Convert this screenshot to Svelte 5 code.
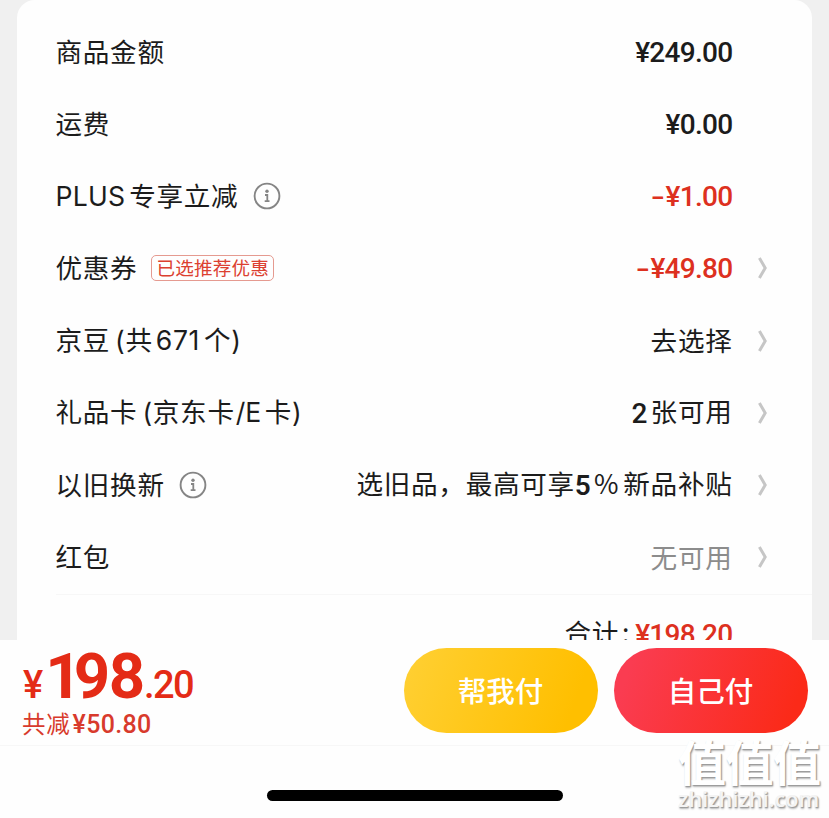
<script>
  const rows = [
    { label: [{ t: '商品金额' }], value: [{ t: '¥249.00', k: 'num' }] },
    { label: [{ t: '运费' }], value: [{ t: '¥0.00', k: 'num' }] },
    { label: [{ t: 'PLUS', k: 'latin' }, { t: '专享立减', k: 'after' }], info: true, value: [{ t: '-', k: 'num dash' }, { t: '¥1.00', k: 'num' }], tone: 'red' },
    { label: [{ t: '优惠券' }], tag: '已选推荐优惠', value: [{ t: '-', k: 'num dash' }, { t: '¥49.80', k: 'num' }], tone: 'red', go: true },
    { label: [{ t: '京豆' }, { t: '(', k: 'paren' }, { t: '共' }, { t: '671', k: 'count' }, { t: '个', k: 'after' }, { t: ')', k: 'close' }], value: [{ t: '去选择' }], go: true },
    { label: [{ t: '礼品卡' }, { t: '(', k: 'paren' }, { t: '京东卡' }, { t: '/E', k: 'slash' }, { t: '卡', k: 'after' }, { t: ')', k: 'close' }], value: [{ t: '2', k: 'num' }, { t: '张可用', k: 'after' }], go: true },
    { label: [{ t: '以旧换新' }], info: true, value: [{ t: '选旧品，最高可享' }, { t: '5', k: 'num five' }, { t: '%', k: 'pct' }, { t: '新品补贴', k: 'after' }], go: true },
    { label: [{ t: '红包' }], value: [{ t: '无可用' }], tone: 'muted', go: true }
  ];
</script>

{#snippet pieces(list)}{#each list as p}<span class={p.k ?? 'cjk'}>{p.t}</span>{/each}{/snippet}

<div class="screen">
  <main>
    <section class="card">
      <div class="rows">
        {#each rows as row}
          <div class="row">
            <div class="label">{@render pieces(row.label)}</div>
            {#if row.info}
              <svg class="info" width="28" height="28" viewBox="0 0 28 28" fill="none" stroke="#858585">
                <circle cx="14" cy="14" r="12.4" stroke-width="1.9" />
                <circle cx="14" cy="9.3" r="1.7" fill="#858585" stroke="none" />
                <path d="M12 13h2.3v6M11.7 19.2h4.8" stroke-width="1.8" />
              </svg>
            {/if}
            {#if row.tag}<span class="tag">{row.tag}</span>{/if}
            <div class="value {row.tone ?? ''}">{@render pieces(row.value)}</div>
            <div class="go">
              {#if row.go}
                <svg width="12" height="22" viewBox="0 0 12 22" fill="none" stroke="#c6c6c6" stroke-width="3">
                  <path d="M2.4 1 8.2 11 2.4 21" />
                </svg>
              {/if}
            </div>
          </div>
        {/each}
      </div>
      <div class="total"><span>合计</span><span class="colon">:</span><span class="num red">¥198.20</span></div>
    </section>
  </main>
  <footer>
    <div class="sum">
      <div class="price"><span class="yen">¥</span><span class="big"><span class="one">1</span>98</span><span class="cents">.20</span></div>
      <div class="saved"><span>共减</span><span class="savednum">¥50.80</span></div>
    </div>
    <button class="help">帮我付</button>
    <button class="self">自己付</button>
  </footer>
  <div class="home"><i></i></div>
  <div class="mark"><div class="zh">值值值</div><div class="site">zhizhizhi.com</div></div>
</div>

<style>
  .screen {
    position: relative;
    width: 829px;
    height: 818px;
    overflow: hidden;
    display: flex;
    flex-direction: column;
    background: #fefefe;
    color: #1c1c1c;
    font-family: 'Noto Sans CJK SC', sans-serif;
  }
  main {
    height: 640px;
    overflow: hidden;
    background: #f0f0f0;
    padding: 0 17px;
    box-sizing: border-box;
    flex: none;
  }
  .card {
    height: 680px;
    background: #fefefe;
    border-radius: 18px;
    padding: 16px 0 0 38.5px;
    box-sizing: border-box;
  }
  .rows {
    height: 578px;
    border-bottom: 1px solid #f7f7f7;
  }
  .row {
    display: flex;
    align-items: center;
    height: 72.15px;
    font-size: 26.6px;
    letter-spacing: 0.7px;
    line-height: 40px;
    white-space: nowrap;
  }
  .label { padding-bottom: 2px; }
  .value {
    margin-left: auto;
    margin-right: 0.5px;
    padding-bottom: 1px;
  }
  .go {
    width: 79px;
    padding-left: 24px;
    box-sizing: border-box;
    display: flex;
  }
  .red { color: #dd3020; }
  .muted { color: #8c8c8c; }
  .num {
    position: relative;
    top: 0.5px;
    font-family: Roboto, sans-serif;
    font-weight: 500;
    font-size: 28px;
    letter-spacing: -0.7px;
  }
  .dash {
    display: inline-block;
    transform: scaleX(1.45);
    transform-origin: right;
    margin-right: 2px;
  }
  .five { font-weight: 600; }
  .latin, .count, .slash, .paren, .close { font-family: Inter, sans-serif; }
  .latin { letter-spacing: 0.2px; }
  .after { margin-left: 4px; }
  .paren { margin-left: 5px; }
  .count {
    margin-left: 3px;
    letter-spacing: 0.6px;
  }
  .slash {
    margin-left: 1px;
    letter-spacing: 0;
  }
  .slash + .after { margin-left: 3.5px; }
  .pct { margin-left: 4px; }
  .info { margin-left: 14.5px; }
  .tag {
    margin-left: 14px;
    height: 26px;
    box-sizing: border-box;
    border: 1px solid #e59a90;
    border-radius: 5px;
    padding: 0 4px;
    color: #dc4030;
    font-size: 18.6px;
    line-height: 22px;
    letter-spacing: 0.2px;
  }
  .total {
    display: flex;
    justify-content: flex-end;
    align-items: baseline;
    margin-right: 79.5px;
    padding-top: 17px;
    font-size: 26.6px;
    line-height: 40px;
    letter-spacing: 0.7px;
  }
  .colon { margin: 0 5px 0 3px; }
  footer {
    height: 106px;
    flex: none;
    box-sizing: border-box;
    border-bottom: 1px solid #f7f7f7;
    display: flex;
    align-items: flex-start;
    padding: 8px 21px 0 22px;
  }
  .sum {
    flex: 1;
    color: #e42b16;
    white-space: nowrap;
  }
  .price {
    height: 60px;
    line-height: 57px;
    padding-left: 1px;
    font-family: Roboto, sans-serif;
    font-weight: 500;
  }
  .yen, .cents { font-size: 38px; }
  .yen { margin-right: 2px; }
  .cents { letter-spacing: -1.6px; }
  .big {
    font-size: 63.5px;
    font-weight: 700;
    letter-spacing: -1.2px;
  }
  .one { letter-spacing: -8px; }
  .saved {
    font-size: 23.5px;
    line-height: 31px;
    letter-spacing: 0.8px;
    color: #d83a2c;
  }
  .savednum {
    font-family: Roboto, sans-serif;
    font-weight: 500;
    font-size: 25px;
    letter-spacing: 0.3px;
    margin-left: 2px;
  }
  button {
    width: 194px;
    height: 85px;
    border: 0;
    border-radius: 43px;
    padding: 0 1px 2px 0;
    color: #fff;
    font: 500 28.5px 'Noto Sans CJK SC', sans-serif;
  }
  .help {
    margin-left: -1px;
    background: linear-gradient(110deg, #ffd034, #ffbf00 85%);
  }
  .self {
    margin-left: 16px;
    background: linear-gradient(110deg, #fa3c51 10%, #fb2a18 90%);
  }
  .home {
    display: flex;
    justify-content: center;
    padding-top: 44px;
  }
  .home i {
    width: 296px;
    height: 11px;
    border-radius: 6px;
    background: #000;
  }
  .mark {
    position: absolute;
    left: 678px;
    top: 733px;
    color: #fff;
    white-space: nowrap;
    text-shadow: 1px 1px 1px #999, 1px 2px 2px #bbb;
  }
  .zh {
    font-size: 48px;
    font-weight: 700;
    line-height: 54px;
    letter-spacing: -0.5px;
  }
  .site {
    font: 600 21.5px/24px 'Noto Sans', sans-serif;
    letter-spacing: 0;
    color: #f4f4f4;
  }
</style>
